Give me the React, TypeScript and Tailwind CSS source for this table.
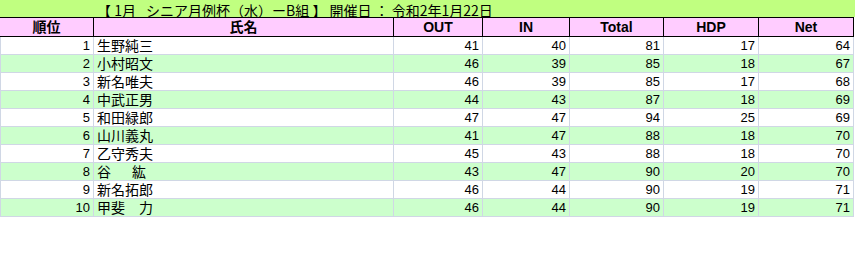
import React from "react";

const rows: [number, string, number, number, number, number, number][] = [
  [1, "生野純三", 41, 40, 81, 17, 64],
  [2, "小村昭文", 46, 39, 85, 18, 67],
  [3, "新名唯夫", 46, 39, 85, 17, 68],
  [4, "中武正男", 44, 43, 87, 18, 69],
  [5, "和田緑郎", 47, 47, 94, 25, 69],
  [6, "山川義丸", 41, 47, 88, 18, 70],
  [7, "乙守秀夫", 45, 43, 88, 18, 70],
  [8, "谷　\u2002紘", 43, 47, 90, 20, 70],
  [9, "新名拓郎", 46, 44, 90, 19, 71],
  [10, "甲斐　力", 46, 44, 90, 19, 71],
];

const cols = "grid-cols-[94px_300px_89px_87px_94px_95px_95px]";
const font = { fontFamily: '"Liberation Sans", "Noto Sans CJK JP", sans-serif' };
const cjk = { fontFamily: '"Noto Sans CJK JP", "Liberation Sans", sans-serif' };

export default function App() {
  return (
    <div className="w-[855px] h-[253px] bg-white text-black text-[13px]" style={font}>
      <div
        className="h-[17px] w-[855px] bg-[#c0ff80] pl-[97px] pt-[3px] text-[14px] leading-[14px] whitespace-pre"
        style={cjk}
      >
        {"【 1月\u2002 シニア月例杯（水）ーB組 】 開催日 ： 令和2年1月22日"}
      </div>
      <div className={`grid ${cols} w-[854px] h-[20px] bg-[#ffccff] border-y border-black font-bold text-[14px]`}>
        {["順位", "氏名", "OUT", "IN", "Total", "HDP", "Net"].map((h) => (
          <div key={h} className="border-r border-black text-center leading-[19px]">
            {h}
          </div>
        ))}
      </div>
      {rows.map((r, i) => (
        <div
          key={r[0]}
          className={`grid ${cols} w-[854px] h-[18px] ${i % 2 === 1 ? "bg-[#ccffcc]" : "bg-white"}`}
        >
          <div className="border-l border-r border-b border-[#d0d7e5] text-right pr-[3px] leading-[17px]">{r[0]}</div>
          <div
            className="border-r border-b border-[#d0d7e5] pl-[3px] text-[14px] leading-[17px] whitespace-pre"
            style={cjk}
          >
            {r[1]}
          </div>
          {r.slice(2).map((v, j) => (
            <div key={j} className="border-r border-b border-[#d0d7e5] text-right pr-[3px] leading-[17px]">
              {v as number}
            </div>
          ))}
        </div>
      ))}
    </div>
  );
}
